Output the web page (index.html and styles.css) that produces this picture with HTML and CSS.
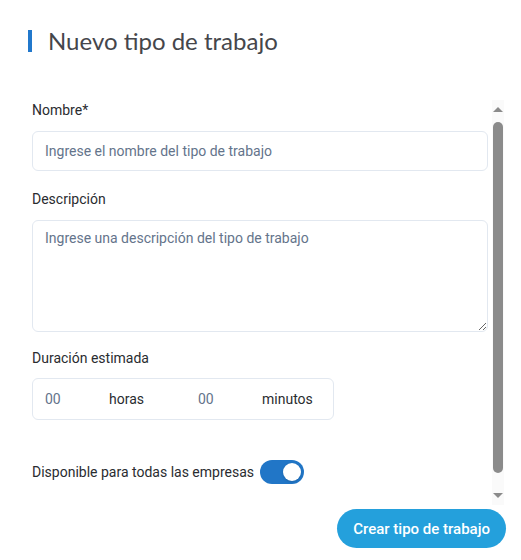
FILE: index.html
```html
<!DOCTYPE html>
<html lang="es">
<head>
  <meta charset="UTF-8">
  <meta name="viewport" content="width=device-width, initial-scale=1.0">
  <title>Nuevo tipo de trabajo</title>
  <link rel="stylesheet" href="styles.css">
</head>
<body>
  <h1 class="title">Nuevo tipo de trabajo</h1>

  <div class="form-wrap">
    <div class="form-scroll">
      <div class="field">
        <label for="nombre">Nombre*</label>
        <input id="nombre" type="text" placeholder="Ingrese el nombre del tipo de trabajo">
      </div>

      <div class="field field-desc">
        <label for="descripcion">Descripción</label>
        <textarea id="descripcion" placeholder="Ingrese una descripción del tipo de trabajo"></textarea>
      </div>

      <div class="field">
        <label>Duración estimada</label>
        <div class="duration">
          <input type="text" placeholder="00">
          <span>horas</span>
          <input type="text" placeholder="00">
          <span>minutos</span>
        </div>
      </div>

      <div class="toggle-row">
        <span>Disponible para todas las empresas</span>
        <label class="switch">
          <input type="checkbox" checked>
          <span class="slider"></span>
        </label>
      </div>
    </div>

    <!-- scrollbar drawn by hand, the browser's one is hidden -->
    <div class="scrollbar">
      <span class="arrow arrow-up"></span>
      <span class="thumb"></span>
      <span class="arrow arrow-down"></span>
    </div>
  </div>

  <div class="actions">
    <button class="btn-primary">Crear tipo de trabajo</button>
  </div>
</body>
</html>
```

FILE: styles.css
```css
body {
  margin: 0;
  background-color: #fff;
  font-family: Roboto, "Liberation Sans", sans-serif;
  color: #2a2c30;
}
.title {
  margin: 30px 0 0 28px;
  padding-left: 16px;
  border-left: 4px solid #2178cc;
  height: 22px;
  line-height: 22px;
  font-family: Lato, "Open Sans", sans-serif;
  font-size: 24px;
  font-weight: 400;
  color: #45464b;
}
.form-wrap {
  display: flex;
  margin: 48px 17px 0 20px;
  height: 405px;
}
.form-scroll {
  flex: 1;
  padding: 0 4px 0 12px;
  overflow: hidden;
}
.scrollbar {
  display: flex;
  flex-direction: column;
  align-items: center;
  width: 12px;
  background-color: #fafafa;
}
.arrow {
  width: 0;
  height: 0;
  border-left: 5px solid transparent;
  border-right: 5px solid transparent;
}
.arrow-up {
  margin: 7px 0 10px;
  border-bottom: 5px solid #8b8b8b;
}
.arrow-down {
  margin: auto 0 7px;
  border-top: 5px solid #8b8b8b;
}
.thumb {
  width: 10px;
  height: 351px;
  border-radius: 5px;
  background-color: #8b8b8b;
}
.field {
  margin-bottom: 18px;
}
.field-desc {
  margin-bottom: 16px;
}
.field label {
  display: block;
  font-size: 14px;
  line-height: 20px;
  margin-bottom: 11px;
}
.field-desc + .field label {
  margin-bottom: 10px;
}
.field input,
.field textarea {
  display: block;
  box-sizing: border-box;
  width: 100%;
  border: 1px solid #e2e8f0;
  border-radius: 6px;
  padding: 0 12px;
  font-family: Roboto, "Liberation Sans", sans-serif;
  font-size: 14px;
  color: #2a2c30;
  outline: none;
}
.field input {
  height: 40px;
}
.field textarea {
  height: 112px;
  padding-top: 9px;
  resize: vertical;
}
::placeholder {
  color: #64748b;
}
.duration {
  display: grid;
  grid-template-columns: 64px 89px 64px auto;
  align-items: center;
  box-sizing: border-box;
  width: 302px;
  height: 42px;
  border: 1px solid #e2e8f0;
  border-radius: 6px;
  padding-left: 12px;
  font-size: 14px;
}
.duration input {
  border: none;
  padding: 0;
  height: 38px;
  width: 100%;
}
.toggle-row {
  display: flex;
  align-items: center;
  gap: 6px;
  margin-top: 40px;
  font-size: 14px;
}
.switch {
  position: relative;
  display: inline-block;
  width: 44px;
  height: 24px;
}
.switch input {
  display: none;
}
.slider {
  position: absolute;
  inset: 0;
  background-color: #2176c7;
  border-radius: 12px;
}
.slider::after {
  content: "";
  position: absolute;
  top: 3px;
  right: 3px;
  width: 18px;
  height: 18px;
  border-radius: 50%;
  background-color: #fff;
  box-shadow: 0 1px 3px rgba(0, 0, 0, 0.15);
}
.actions {
  display: flex;
  justify-content: flex-end;
  margin: 4px 15px 0 0;
}
.btn-primary {
  height: 39px;
  padding: 0 16px;
  border: none;
  border-radius: 20px;
  background-color: #24a0dc;
  color: #fff;
  font-family: Roboto, "Liberation Sans", sans-serif;
  font-size: 15px;
  font-weight: 500;
  cursor: pointer;
}
```
